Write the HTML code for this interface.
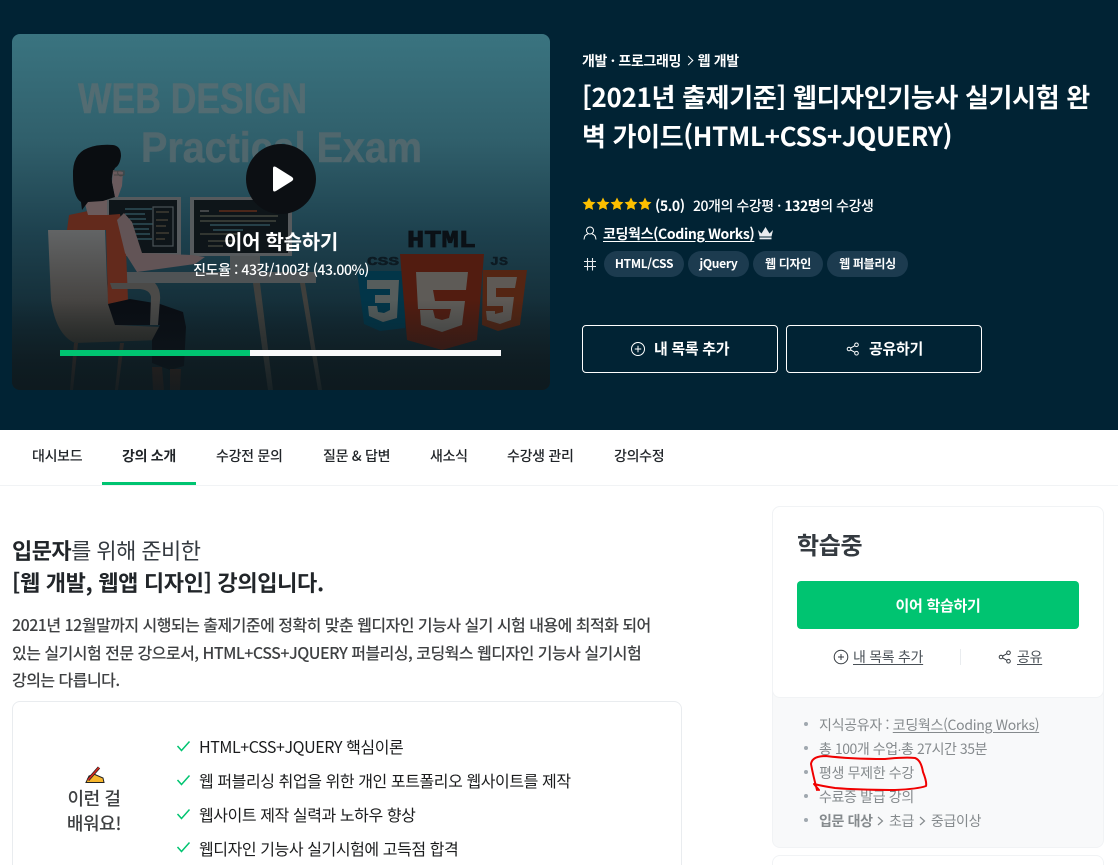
<!DOCTYPE html>
<html lang="ko"><head><meta charset="utf-8"><title>강의</title>
<style>
*{box-sizing:border-box}
html,body{margin:0;padding:0;background:#fff;width:1118px;height:865px;overflow:hidden}
#p{position:absolute;left:0;top:0;width:1118px;height:865px;overflow:hidden;font-family:"Noto Sans CJK KR","Liberation Sans",sans-serif}
.t{position:absolute;white-space:nowrap;letter-spacing:-.3px}
.w{color:#fff}
.hero{position:absolute;left:0;top:0;width:1118px;height:430px;background:#012334}
.tag{position:absolute;top:251px;height:26px;border-radius:13px;background:#1c3b4f;color:#fff;font-size:12px;font-weight:700;line-height:26px;text-align:center;letter-spacing:-.3px}
.hb{position:absolute;top:325px;width:196px;height:48px;border:1px solid #fff;border-radius:4px}
.nav{position:absolute;top:446px;font-size:14px;line-height:20px;color:#212529;white-space:nowrap;letter-spacing:-.3px}
u{text-underline-offset:2px}
svg text{font-family:"Liberation Sans",sans-serif}
</style></head>
<body>
<div id="p">
<div class="hero"></div>
<svg style="position:absolute;left:0;top:0" width="560" height="400" viewBox="0 0 560 400">
<defs>
<linearGradient id="bg" x1="0" y1="34" x2="0" y2="390" gradientUnits="userSpaceOnUse"><stop offset="0" stop-color="#3a7480"/><stop offset=".3" stop-color="#305f6b"/><stop offset=".55" stop-color="#1e424f"/><stop offset=".8" stop-color="#132b35"/><stop offset="1" stop-color="#0e1a1f"/></linearGradient>
<linearGradient id="chair" x1="0" y1="230" x2="0" y2="345" gradientUnits="userSpaceOnUse"><stop offset="0" stop-color="#626465"/><stop offset=".6" stop-color="#474543"/><stop offset="1" stop-color="#33312c"/></linearGradient>
<linearGradient id="dark" x1="0" y1="300" x2="0" y2="390" gradientUnits="userSpaceOnUse"><stop offset="0" stop-color="#0e1a1f" stop-opacity="0"/><stop offset="1" stop-color="#0e1a1f" stop-opacity=".8"/></linearGradient>
<clipPath id="c"><rect x="12" y="34" width="538" height="356" rx="8"/></clipPath>
</defs>
<g clip-path="url(#c)">
<rect x="12" y="34" width="538" height="356" fill="url(#bg)"/>
<text x="78" y="113" style="font-family:'Liberation Sans',sans-serif;font-size:43px;font-weight:700" fill="#536c72" stroke="#536c72" stroke-width=".6" textLength="229" lengthAdjust="spacingAndGlyphs">WEB DESIGN</text>
<text x="141" y="162" style="font-family:'Liberation Sans',sans-serif;font-size:43px;font-weight:700" fill="#50676d" stroke="#50676d" stroke-width=".6" textLength="281" lengthAdjust="spacingAndGlyphs">Practical Exam</text>
<!-- desk -->
<path d="M230 256h30v16h56v11H125v-11h105z" fill="#4f5355"/>
<path d="M253 283l15 107h5l-13-107zM300 283l18 107h4l-17-107z" fill="#3f3f3c"/>
<!-- monitors -->
<rect x="107" y="197" width="74" height="59" fill="#565a5d"/><rect x="109" y="200" width="68" height="53" fill="#0e1519"/>
<rect x="190" y="197" width="102" height="59" fill="#565a5d"/><rect x="194" y="200" width="94" height="53" fill="#0e1519"/>
<g stroke-width="1.200" fill="none">
<path d="M125 209h27M125 214h20M128 219h18M125 224h28M125 229h24M130 234h20M130 239h22" stroke="#345a64"/>
<rect x="153" y="207" width="20" height="39" stroke="#4a5458"/>
<path d="M156 212h13M156 220h12M156 226h10M156 233h13M156 239h9" stroke="#4a4438"/>
<path d="M200 211h9" stroke="#666"/><path d="M219 211h38" stroke="#70331b"/><path d="M200 216h78M200 221h76" stroke="#4c4f44"/>
<path d="M210 225h60M213 230h30" stroke="#345a64"/><path d="M200 234h40M208 241h28M208 246h15" stroke="#484b40"/>
</g>
<!-- chair -->
<path d="M48 230H105L107 283Q109 310 116 325L160 327V340L75 343Q56 335 51 300Z" fill="url(#chair)"/>
<!-- shirt -->
<path d="M67 230L69 215L88 211L107 215L120 214L126 250L128 300L108 304L106 230Z" fill="#632a1c"/>
<!-- neck -->
<path d="M84 200H107V215H88Z" fill="#6b5b5c"/>
<!-- pants -->
<path d="M108 304L130 299L160 304L183 312L186 327L184 366L170 370L152 363L152 340L160 325L115 325Z" fill="#0a0d13"/>
<path d="M152 367h10l2 23h-11zM170 369h11l-1 21h-10z" fill="#3c241d"/>
<path d="M74 343l-4 47h3l5-47zM120 343l-5 47h3l6-47z" fill="#3a2e29"/>
<!-- arm -->
<path d="M117 220L124 213L132 222L142 253L192 255L205 257L195 264L137 272L125 253Z" fill="#625456"/>
<path d="M110 283H155Q161 290 160 300L158 325L150 325L151 297Q150 290 140 289H112Z" fill="#4b4a48"/>
<!-- hair -->
<path d="M73 176Q72 154 88 148Q98 144 113 145Q121 146 121 156Q120 165 115 168Q111 175 112 182L115 197L103 201L88 202L82 210L81 202Q73 197 73 176Z" fill="#0a0d11"/>
<path d="M113 170L123 172L122 186L118 197H115L112 182Z" fill="#6a5a5d"/>
<path d="M113 171h11v4h-10M118 171a3 3 0 1 0 6 3" fill="none" stroke="#444" stroke-width="1"/>
<!-- shields -->
<path d="M357 271H405V328L380 331L364 324Z" fill="#023548"/>
<path d="M367 280H399L397 318L383 322L369 316L368 306H377L378 312L384 313L390 310V303H375V295H390V289H367Z" fill="#565d5c"/>
<path d="M483 270H527L520 325L498 331L482 325Z" fill="#542513"/>
<path d="M487 277H517L515 288H496V297H514L511 320L500 324L487 320L486 311H495V314L503 312V306H487Z" fill="#5e5955"/>
<path d="M400 254H484L477 340L442 350L407 340Z" fill="#521c10"/>
<path d="M416 272H468L466 290H433L435 301H465L462 325L442 332L421 325L420 310H433L435 318L442 320L449 318L451 309H418Z" fill="#5e5b57"/>
<text x="407" y="247" style="font-family:'Liberation Mono',monospace;font-weight:700;font-size:24px" fill="#0b1116" stroke="#0b1116" stroke-width=".8" textLength="69" lengthAdjust="spacingAndGlyphs">HTML</text>
<text x="367" y="265" style="font-family:'Liberation Mono',monospace;font-weight:700;font-size:12px" fill="#0d1a22" stroke="#0d1a22" stroke-width=".5" textLength="32" lengthAdjust="spacingAndGlyphs">CSS</text>
<text x="490" y="265" style="font-family:'Liberation Mono',monospace;font-weight:700;font-size:12px" fill="#0d1a22" stroke="#0d1a22" stroke-width=".4" textLength="18" lengthAdjust="spacingAndGlyphs">JS</text>
<rect x="12" y="300" width="538" height="90" fill="url(#dark)"/>
<circle cx="281" cy="179" r="35" fill="#0c0f13"/>
<path d="M273 168.500Q273 165.500 276 167L292 177Q294.500 179 292 181L276 191Q273 192.500 273 189.500Z" fill="#fff"/>
<rect x="60" y="350" width="441" height="6" fill="#f8f9fa"/><rect x="60" y="350" width="190" height="6" fill="#00c471"/>
</g>
</svg>
<div class="t w" style="left:0;width:562px;text-align:center;top:226px;font-size:20px;line-height:29px;font-weight:700">이어 학습하기</div>
<div class="t w" style="left:0;width:562px;text-align:center;top:260px;font-size:14px;line-height:20px;letter-spacing:-.4px;font-weight:500">진도율 : 43강/100강 (43.00%)</div>

<div class="t w" style="left:582px;top:51px;font-size:14px;line-height:20px;font-weight:700;letter-spacing:-.35px">개발 · 프로그래밍 <span style="display:inline-block;width:7px;height:7px;border:solid #fff;border-width:1px 1px 0 0;transform:rotate(45deg);margin:0 6px 2px 0"></span>웹 개발</div>
<div class="t w" style="left:582px;top:77px;font-size:26px;line-height:39px;font-weight:700;letter-spacing:-.33px">[2021년 출제기준] 웹디자인기능사 실기시험 완<br>벽 가이드(HTML+CSS+JQUERY)</div>

<svg style="position:absolute;left:582px;top:197px" width="70" height="14" viewBox="0 0 70 14" fill="#fdc000">
<path id="s" d="M7 .5L9 4.600L13.500 5.200L10.200 8.300L11.100 12.900L7 10.700L2.900 12.900L3.800 8.300L.5 5.200L5 4.600Z"/>
<use href="#s" x="14"/><use href="#s" x="28"/><use href="#s" x="42"/><use href="#s" x="56"/>
</svg>
<div class="t w" style="left:655px;top:196px;font-size:14px;line-height:20px;font-weight:700;letter-spacing:-.4px">(5.0)</div>
<div class="t w" style="left:693px;top:196px;font-size:14px;line-height:20px;letter-spacing:-.45px;font-weight:500">20개의 수강평 · <b style="font-weight:700">132명</b>의 수강생</div>
<svg style="position:absolute;left:583px;top:226px" width="14" height="14" viewBox="0 0 14 14" fill="none" stroke="#fff" stroke-width="1"><circle cx="7" cy="4.500" r="3.500"/><path d="M1 13.500Q1.500 8.500 5 8M13 13.500Q12.500 8.500 9 8"/></svg>
<div class="t w" style="left:603px;top:224px;font-size:14px;line-height:20px;font-weight:700;letter-spacing:-.35px"><u>코딩웍스(Coding Works)</u></div>
<svg style="position:absolute;left:757px;top:226px" width="17" height="14" viewBox="0 0 17 14" fill="#e9ecef"><path d="M1 4L4.500 7.500L8.500 1L12.500 7.500L16 4L14.500 10.500H2.500Z"/><rect x="2.500" y="11.500" width="12" height="1.800"/></svg>
<svg style="position:absolute;left:583px;top:257px" width="14" height="14" viewBox="0 0 14 14" stroke="#e9ecef" stroke-width="1.100"><path d="M4.500 1V13.500M9.500 1V13.500M1 4.500H13M1 9.500H13"/></svg>
<div class="tag" style="left:604px;width:80px">HTML/CSS</div>
<div class="tag" style="left:688px;width:61px">jQuery</div>
<div class="tag" style="left:753px;width:70px">웹 디자인</div>
<div class="tag" style="left:827px;width:81px">웹 퍼블리싱</div>

<div class="hb" style="left:582px"></div>
<div class="hb" style="left:786px"></div>
<svg style="position:absolute;left:630px;top:341px" width="16" height="16" viewBox="0 0 16 16" fill="none" stroke="#fff"><circle cx="8" cy="8" r="6.500"/><path d="M8 4.800V11.200M4.800 8H11.200"/></svg>
<div class="t w" style="left:654px;top:338px;font-size:15px;line-height:22px;font-weight:700">내 목록 추가</div>
<svg style="position:absolute;left:846px;top:342px" width="14" height="14" viewBox="0 0 14 14" fill="none" stroke="#fff"><circle cx="10.500" cy="2.800" r="1.800"/><circle cx="10.500" cy="11.200" r="1.800"/><circle cx="3" cy="7" r="1.800"/><path d="M4.600 6.100L8.900 3.700M4.600 7.900L8.900 10.300"/></svg>
<div class="t w" style="left:869px;top:338px;font-size:15px;line-height:22px;font-weight:700">공유하기</div>

<!-- nav -->
<div style="position:absolute;left:0;top:485px;width:1118px;height:1px;background:#f1f3f5"></div>
<div style="position:absolute;left:102px;top:482px;width:94px;height:3px;background:#00c471"></div>
<div class="nav" style="left:32px;font-weight:500">대시보드</div>
<div class="nav" style="left:122px;font-weight:700">강의 소개</div>
<div class="nav" style="left:216px;font-weight:500">수강전 문의</div>
<div class="nav" style="left:323px;font-weight:500">질문 &amp; 답변</div>
<div class="nav" style="left:430px;font-weight:500">새소식</div>
<div class="nav" style="left:507px;font-weight:500">수강생 관리</div>
<div class="nav" style="left:614px;font-weight:500">강의수정</div>

<!-- content -->
<div class="t" style="left:12px;top:534px;font-size:22px;line-height:32px;color:#343a40;font-weight:400;letter-spacing:-.55px"><b style="font-weight:700;color:#212529">입문자</b>를 위해 준비한</div>
<div class="t" style="left:12px;top:566px;font-size:22px;line-height:32px;color:#212529;font-weight:700;letter-spacing:-.33px">[웹 개발, 웹앱 디자인] 강의입니다.</div>
<div class="t" style="left:12px;top:611px;font-size:16px;line-height:27.500px;color:#3e4042;letter-spacing:-.52px;font-weight:500">2021년 12월말까지 시행되는 출제기준에 정확히 맞춘 웹디자인 기능사 실기 시험 내용에 최적화 되어<br>있는 실기시험 전문 강으로서, HTML+CSS+JQUERY 퍼블리싱, 코딩웍스 웹디자인 기능사 실기시험<br>강의는 다릅니다.</div>

<div style="position:absolute;left:12px;top:701px;width:670px;height:190px;border:1px solid #e9ecef;border-radius:8px;background:#fff"></div>
<svg style="position:absolute;left:84px;top:766px" width="21" height="18" viewBox="0 0 21 18"><path d="M2 16.500L5 10L10 8L12 9L19 12L20 16.500Z" fill="#f7b62c" stroke="#222" stroke-width="1"/><path d="M4 14L15 1.500" stroke="#222" stroke-width="3"/><path d="M4 14L15 1.500" stroke="#d8281f" stroke-width="1.600"/></svg>
<div class="t" style="left:44px;width:100px;text-align:center;top:786px;font-size:18px;line-height:25px;font-weight:500;color:#3e4042;letter-spacing:-.4px">이런 걸<br>배워요!</div>
<svg style="position:absolute;left:176px;top:740px" width="15" height="120" viewBox="0 0 15 120" fill="none" stroke="#00c471" stroke-width="1.500"><path d="M1.500 6L5.500 10.500L13.500 1.500"/><path d="M1.500 40L5.500 44.500L13.500 35.500"/><path d="M1.500 74L5.500 78.500L13.500 69.500"/><path d="M1.500 107L5.500 111.500L13.500 102.500"/></svg>
<div class="t" style="left:199px;top:735px;font-size:16px;line-height:22px;color:#1b1c1d;letter-spacing:-.42px">HTML+CSS+JQUERY 핵심이론</div>
<div class="t" style="left:199px;top:769px;font-size:16px;line-height:22px;color:#1b1c1d;letter-spacing:-.42px">웹 퍼블리싱 취업을 위한 개인 포트폴리오 웹사이트를 제작</div>
<div class="t" style="left:199px;top:803px;font-size:16px;line-height:22px;color:#1b1c1d;letter-spacing:-.42px">웹사이트 제작 실력과 노하우 향상</div>
<div class="t" style="left:199px;top:837px;font-size:16px;line-height:22px;color:#1b1c1d;letter-spacing:-.42px">웹디자인 기능사 실기시험에 고득점 합격</div>

<!-- sidebar -->
<div style="position:absolute;left:772px;top:506px;width:332px;height:342px;border:1px solid #f1f3f5;border-radius:8px;background:#f8f9fa"></div>
<div style="position:absolute;left:772px;top:506px;width:332px;height:192px;border:1px solid #f1f3f5;border-radius:8px;background:#fff"></div>
<div style="position:absolute;left:772px;top:855px;width:332px;height:40px;border:1px solid #f1f3f5;border-radius:8px;background:#fff"></div>
<div class="t" style="left:797px;top:526px;font-size:24px;line-height:35px;font-weight:700;color:#343a40">학습중</div>
<div class="t w" style="left:797px;top:581px;width:282px;height:48px;background:#00c471;border-radius:4px;text-align:center;font-size:15px;line-height:49px;font-weight:700">이어 학습하기</div>
<svg style="position:absolute;left:833px;top:649px" width="16" height="16" viewBox="0 0 16 16" fill="none" stroke="#343a40"><circle cx="8" cy="8" r="6.800"/><path d="M8 5V11M5 8H11"/></svg>
<div class="t" style="left:853px;top:647px;font-size:14px;line-height:21px;color:#495057"><u>내 목록 추가</u></div>
<div style="position:absolute;left:960px;top:649px;width:1px;height:16px;background:#e9ecef"></div>
<svg style="position:absolute;left:998px;top:650px" width="14" height="14" viewBox="0 0 14 14" fill="none" stroke="#343a40"><circle cx="10.500" cy="2.800" r="1.800"/><circle cx="10.500" cy="11.200" r="1.800"/><circle cx="3" cy="7" r="1.800"/><path d="M4.600 6.100L8.900 3.700M4.600 7.900L8.900 10.300"/></svg>
<div class="t" style="left:1017px;top:647px;font-size:14px;line-height:21px;color:#495057"><u>공유</u></div>
<svg style="position:absolute;left:803px;top:721px" width="6" height="106" viewBox="0 0 6 106" fill="#a0a8af"><circle cx="3" cy="3" r="2"/><circle cx="3" cy="27" r="2"/><circle cx="3" cy="51" r="2"/><circle cx="3" cy="75" r="2"/><circle cx="3" cy="99" r="2"/></svg>
<div class="t" style="left:819px;top:715px;font-size:14px;line-height:21px;color:#858a8d;letter-spacing:-.3px">지식공유자 : <u>코딩웍스(Coding Works)</u></div>
<div class="t" style="left:819px;top:739px;font-size:14px;line-height:21px;color:#858a8d;letter-spacing:-.45px">총 100개 수업∙총 27시간 35분</div>
<div class="t" style="left:819px;top:763px;font-size:14px;line-height:21px;color:#858a8d;letter-spacing:-.35px">평생 무제한 수강</div>
<div class="t" style="left:819px;top:787px;font-size:14px;line-height:21px;color:#858a8d;letter-spacing:-.35px">수료증 발급 강의</div>
<div class="t" style="left:819px;top:811px;font-size:14px;line-height:21px;color:#858a8d;letter-spacing:-.35px;font-weight:700">입문 대상</div>
<svg style="position:absolute;left:877px;top:816px" width="50" height="10" viewBox="0 0 50 10" fill="none" stroke="#858a8d" stroke-width="1.200"><path d="M1 1L5.500 5L1 9M43 1L47.500 5L43 9"/></svg>
<div class="t" style="left:889px;top:811px;font-size:14px;line-height:21px;color:#858a8d;letter-spacing:-.35px">초급</div>
<div class="t" style="left:931px;top:811px;font-size:14px;line-height:21px;color:#858a8d;letter-spacing:-.35px">중급이상</div>
<svg style="position:absolute;left:805px;top:750px" width="135" height="50" viewBox="805 750 135 50" fill="none" stroke="#f00000" stroke-width="2" stroke-linejoin="round" stroke-linecap="round"><path d="M817 790Q813 775 811 764Q812 756 826 756Q850 759 885 759Q905 757 915 758Q921 760 923 772Q927 782 926 786Q918 789 895 790Q860 790 835 788Q822 786 814 784L819 790"/></svg>
</div>
</body></html>
